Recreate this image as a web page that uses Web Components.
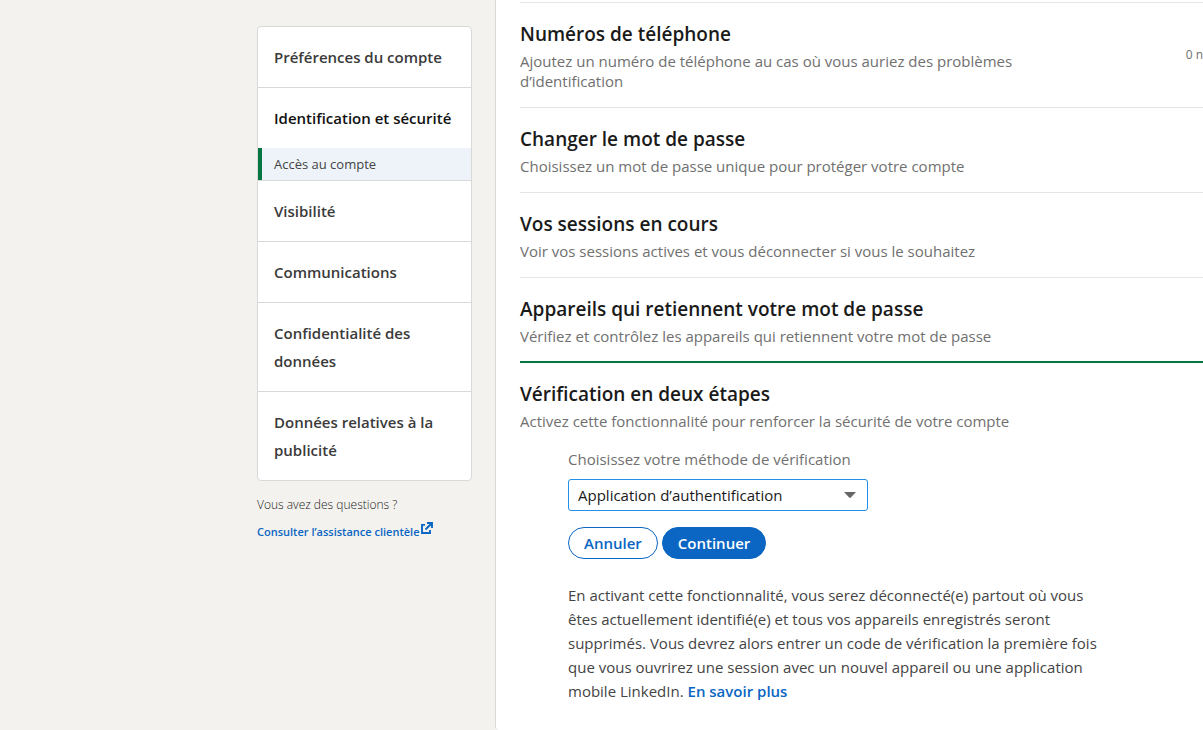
<!DOCTYPE html>
<html lang="fr">
<head>
<meta charset="utf-8">
<meta name="viewport" content="width=device-width, initial-scale=1">
<title>Identification et sécurité</title>
<style>
  :root {
    --sans: "Segoe UI", "Open Sans", "Noto Sans", sans-serif;
    --line: #d9d9d8;
    --green: #057642;
    --blue: #0a66c2;
    --muted: #707070;
  }
  html, body { margin: 0; }
  body { background: #f3f2ee; font: 15px/20px var(--sans); color: #1a1a1a; overflow-x: hidden; }
</style>
</head>
<body>
<settings-page></settings-page>

<script>
const define = (name, html) => customElements.define(name, class extends HTMLElement {
  constructor() {
    super();
    const t = document.createElement('template');
    t.innerHTML = html;
    this.attachShadow({ mode: 'open' }).append(t.content.cloneNode(true));
  }
});

define('nav-section', `
<style>
  :host { display: block; }
  :host(:not(:first-child)) { border-top: 1px solid var(--line); }
  a { display: block; padding: 16px; font-size: 15px; line-height: 28px; font-weight: 600; color: #3a3a3a; text-decoration: none; }
  :host([current]) a { color: #111; }
</style>
<a href="#"><slot></slot></a><slot name="sub"></slot>`);

define('nav-subitem', `
<style>
  :host { display: block; background: #edf3f8; border-left: 4px solid var(--green); }
  a { display: block; padding: 0 12px; font-size: 13px; line-height: 32px; color: #444; text-decoration: none; }
</style>
<a href="#" aria-current="page"><slot></slot></a>`);

define('help-block', `
<style>
  :host { display: block; padding-top: 14px; font-size: 12px; line-height: 20px; color: #222; }
  p { margin: 0 0 7px; font-weight: 300; }
  a { display: flex; align-items: flex-start; gap: 2px; color: var(--blue); font-size: 11px; font-weight: 600; text-decoration: none; white-space: nowrap; }
  svg { width: 12px; height: 12px; }
</style>
<p>Vous avez des questions ?</p>
<a href="#">Consulter l’assistance clientèle<svg viewBox="0 0 12 12" aria-hidden="true"><path d="M4 2.9H1V11h8V8M6 1h5v5M11 1 4.5 7.5" fill="none" stroke="currentColor" stroke-width="1.9"/></svg></a>`);

define('side-nav', `
<style>
  :host { display: block; }
  nav { background: #fff; border: 1px solid var(--line); border-radius: 4px; overflow: hidden; }
</style>
<nav aria-label="Préférences">
  <nav-section>Préférences du compte</nav-section>
  <nav-section current>Identification et sécurité<nav-subitem slot="sub">Accès au compte</nav-subitem></nav-section>
  <nav-section>Visibilité</nav-section>
  <nav-section>Communications</nav-section>
  <nav-section>Confidentialité des données</nav-section>
  <nav-section>Données relatives à la publicité</nav-section>
</nav>
<help-block></help-block>`);

define('setting-row', `
<style>
  :host { display: block; border-top: 1px solid #e5e5e5; padding: 17px 0 16px; }
  :host([open]) { border-top: 2px solid var(--green); margin-top: -1px; }
  .head { display: flex; justify-content: space-between; }
  .text { max-width: 520px; }
  h2 { margin: 0 0 3px; font-size: 19px; line-height: 28px; font-weight: 600; color: #1a1a1a; }
  p { margin: 0; font-size: 15px; line-height: 20px; color: var(--muted); }
  .state { padding-top: 25px; font-size: 12px; line-height: 20px; color: var(--muted); white-space: nowrap; }
</style>
<div class="head">
  <div class="text"><h2><slot name="title"></slot></h2><p><slot></slot></p></div>
  <div class="state"><slot name="state"></slot></div>
</div>
<slot name="panel"></slot>`);

define('pill-button', `
<style>
  :host { display: block; }
  button { display: block; box-sizing: border-box; height: 32px; padding: 0 15px; border: 1px solid var(--blue); border-radius: 16px; background: #fff; color: var(--blue); font: 600 15px/30px var(--sans); }
  :host([primary]) button { background: var(--blue); color: #fff; }
</style>
<button type="button"><slot></slot></button>`);

define('verification-form', `
<style>
  :host { display: block; padding: 18px 0 0 48px; max-width: 536px; }
  label { display: block; line-height: 20px; color: var(--muted); }
  .select { display: grid; align-items: center; width: 300px; margin: 10px 0 16px; }
  .select > * { grid-area: 1 / 1; }
  select { appearance: none; box-sizing: border-box; width: 100%; height: 32px; padding: 0 32px 0 9px; border: 1px solid #2090ea; border-radius: 3px; background: #fff; color: #1a1a1a; font: 15px/30px var(--sans); }
  svg { justify-self: end; width: 12px; height: 6px; margin-right: 12px; pointer-events: none; }
  .actions { display: flex; gap: 4px; }
  p { margin: 24px 0 0; line-height: 24px; color: #444; }
  a { color: var(--blue); font-weight: 600; text-decoration: none; }
</style>
<label for="method">Choisissez votre méthode de vérification</label>
<div class="select">
  <select id="method"><option>Application d’authentification</option></select>
  <svg viewBox="0 0 12 6" aria-hidden="true"><path d="M0 0h12L6.8 5.6q-.8.8-1.6 0z" fill="#666"/></svg>
</div>
<div class="actions"><pill-button>Annuler</pill-button><pill-button primary>Continuer</pill-button></div>
<p>En activant cette fonctionnalité, vous serez déconnecté(e) partout où vous êtes actuellement identifié(e) et tous vos appareils enregistrés seront supprimés. Vous devrez alors entrer un code de vérification la première fois que vous ouvrirez une session avec un nouvel appareil ou une application mobile LinkedIn. <a href="#">En savoir plus</a></p>`);

define('settings-page', `
<style>
  :host { display: flex; min-height: 100vh; }
  aside { flex: none; box-sizing: border-box; width: 495px; padding: 26px 23px 0 257px; }
  main { flex: 1; min-width: 0; padding: 2px 0 0 24px; background: #fff; border-left: 1px solid var(--line); border-bottom-left-radius: 4px; }
</style>
<aside><side-nav></side-nav></aside>
<main>
  <setting-row><span slot="title">Numéros de téléphone</span>Ajoutez un numéro de téléphone au cas où vous auriez des problèmes d’identification<span slot="state">0 n</span></setting-row>
  <setting-row><span slot="title">Changer le mot de passe</span>Choisissez un mot de passe unique pour protéger votre compte</setting-row>
  <setting-row><span slot="title">Vos sessions en cours</span>Voir vos sessions actives et vous déconnecter si vous le souhaitez</setting-row>
  <setting-row><span slot="title">Appareils qui retiennent votre mot de passe</span>Vérifiez et contrôlez les appareils qui retiennent votre mot de passe</setting-row>
  <setting-row open><span slot="title">Vérification en deux étapes</span>Activez cette fonctionnalité pour renforcer la sécurité de votre compte<verification-form slot="panel"></verification-form></setting-row>
</main>`);
</script>
</body>
</html>
